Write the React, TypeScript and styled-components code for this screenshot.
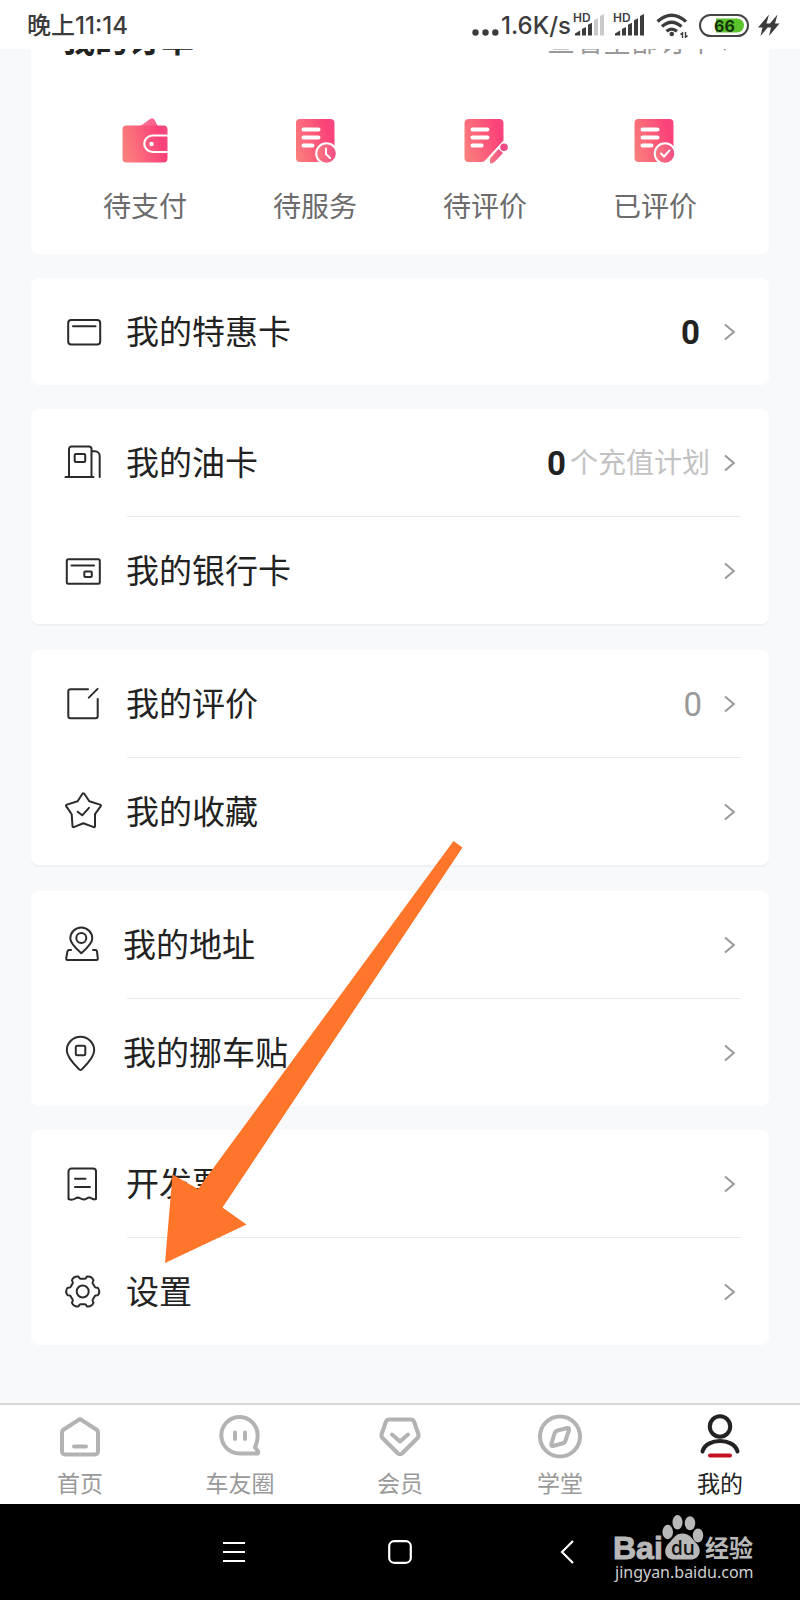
import React from "react";
import styled, { createGlobalStyle } from "styled-components";

const GlobalStyle = createGlobalStyle`
  *, *::before, *::after { box-sizing: border-box; }
  body {
    margin: 0;
    background: #f7f9fb;
    color: #222;
    font-family: Roboto, "Noto Sans CJK SC", sans-serif;
  }
  a { color: inherit; text-decoration: none; }
  button { font: inherit; color: inherit; border: 0; padding: 0; background: none; cursor: pointer; }
  ul { list-style: none; margin: 0; padding: 0; }
  svg { display: block; flex: none; overflow: visible; }
`;

const Page = styled.div`
  position: relative;
  display: flex;
  flex-direction: column;
  min-height: 100vh;
`;

/* ---------- status bar ---------- */

const StatusBar = styled.header`
  display: flex;
  align-items: center;
  justify-content: space-between;
  height: 49px;
  padding: 0 20px 0 27px;
  background: #fff;
  color: #3c3c3c;
  font: 500 24px/48px Inter, "Noto Sans CJK SC", sans-serif;
`;

const StatusText = styled.span`
  padding-top: 2px;
`;

const StatusGroup = styled.div`
  display: flex;
  align-items: center;
`;

const StatusIcon = styled.svg<{ $gap: number }>`
  margin-left: ${(p) => p.$gap}px;
`;

const Signal = ({ gap, bars }: { gap: number; bars: number }) => (
  <StatusIcon $gap={gap} width="32" height="48" viewBox="0 0 32 48" fill="#3c3c3c">
    <text x="-1" y="21" fontFamily="Inter, sans-serif" fontSize="12" fontWeight="600">HD</text>
    <path d="M1 34.600V32.500L6.200 29.500V34.600z" />
    {[1, 2, 3, 4].map((i) => {
      const top = 31 - i * 4.4;
      const left = 2 + i * 6;
      return <path key={i} d={`M${left} ${top + 1.5}l4-2V34.600h-4z`} opacity={i < bars ? 1 : 0.28} />;
    })}
  </StatusIcon>
);

/* ---------- cards ---------- */

const Main = styled.main`
  flex: 1;
  display: flex;
  flex-direction: column;
  gap: 24px;
  padding: 0 31px 58px;
  overflow: hidden;
`;

const Card = styled.section<{ $edge?: boolean; $scrolled?: boolean }>`
  background: #fff;
  border-radius: ${(p) => (p.$scrolled ? "0 0 8px 8px" : "8px")};
  ${(p) => p.$edge && "margin-bottom: 2px; box-shadow: 0 2px 0 #eff0f2;"}
`;

const OrdersHead = styled.div`
  display: flex;
  align-items: center;
  justify-content: space-between;
  height: 48px;
  margin-top: -32px;
  padding: 0 36px 0 31px;
`;

const OrdersTitle = styled.h2`
  margin: 0;
  font-size: 33px;
  line-height: 48px;
  font-weight: 700;
`;

const AllOrders = styled.a`
  display: flex;
  align-items: center;
  gap: 8px;
  padding-top: 4px;
  font-size: 28px;
  line-height: 40px;
  color: #999;
`;

const OrderGrid = styled.div`
  display: grid;
  grid-template-columns: repeat(4, 1fr);
  padding: 52px 29px 26px;
`;

const OrderLink = styled.a`
  display: flex;
  flex-direction: column;
  align-items: center;
  gap: 23px;
  font-size: 28px;
  line-height: 40px;
  color: #6c6c6c;
`;

const Row = styled.a<{ $gap: number }>`
  display: flex;
  align-items: center;
  gap: ${(p) => p.$gap}px;
  height: 107px;
  padding: 0 34px 0 35px;
  font-size: 33px;
  line-height: 40px;
`;

const Divider = styled.li`
  height: 1px;
  margin: 0 28px 0 96px;
  background: #e9e9eb;
`;

const RowLabel = styled.span`
  flex: 1;
  padding-top: 2px;
`;

const RowTail = styled.span`
  display: flex;
  align-items: center;
  gap: 4px;
`;

const Count = styled.span<{ $strong?: boolean; $pad?: boolean }>`
  padding-top: 2px;
  font-size: 33px;
  font-weight: ${(p) => (p.$strong ? 700 : 400)};
  color: ${(p) => (p.$strong ? "#222" : "#999")};
  margin-right: ${(p) => (p.$pad ? (p.$strong ? 10 : 8) : 0)}px;
`;

const Unit = styled.span`
  padding-top: 2px;
  font-size: 28px;
  color: #c2c2c2;
`;

const ChevronBox = styled.span`
  padding-left: 10px;
`;

const Chevron = () => (
  <ChevronBox>
    <svg width="11" height="18" viewBox="0 0 11 18" fill="none" stroke="#999" strokeWidth="2">
      <path d="M1 1.500 9.800 9 1 16.500" />
    </svg>
  </ChevronBox>
);

/* ---------- order icons ---------- */

const OrderIcon = ({ children }: { children: React.ReactNode }) => (
  <svg width="48" height="48" viewBox="0 0 48 48">
    <defs>
      <linearGradient id="coral" gradientUnits="userSpaceOnUse" x1="2" y1="30" x2="46" y2="18">
        <stop offset="0" stopColor="#fb7f7c" />
        <stop offset="0.85" stopColor="#fb4179" />
        <stop offset="1" stopColor="#f54a80" />
      </linearGradient>
      <linearGradient id="badge" x1="0" y1="0" x2="1" y2="0">
        <stop offset="0" stopColor="#fb7880" />
        <stop offset="1" stopColor="#f04c84" />
      </linearGradient>
    </defs>
    {children}
  </svg>
);

const DocLines = () => (
  <path d="M12.500 12.500h15M12.500 20.500h15M12.500 28.500h9" stroke="#fff" strokeWidth="4" strokeLinecap="round" fill="none" />
);

const docBody = "M9 2H39.500a4 4 0 0 1 4 4V41a4 4 0 0 1-4 4H9a4 4 0 0 1-4-4V6a4 4 0 0 1 4-4z";

const WalletIcon = () => (
  <OrderIcon>
    <path d="M18 10 29.500 1.800Q32 .2 33.400 2.800L37 9.500z" fill="url(#coral)" opacity="0.85" />
    <rect x="1.500" y="8.500" width="45" height="37" rx="4" fill="url(#coral)" />
    <path d="M47 18.500H31.500a8 8 0 0 0 0 16.500H47" fill="none" stroke="#fff" strokeWidth="2.200" />
    <circle cx="30.500" cy="27" r="2.200" fill="#fff" />
  </OrderIcon>
);

const DocClockIcon = () => (
  <OrderIcon>
    <path d={docBody} fill="url(#coral)" />
    <DocLines />
    <circle cx="35.500" cy="36.500" r="10.300" fill="url(#badge)" stroke="#fff" strokeWidth="2" />
    <path d="M35 31.500v5.500l4 4" fill="none" stroke="#fff" strokeWidth="2" strokeLinecap="round" />
  </OrderIcon>
);

const DocPenIcon = () => (
  <OrderIcon>
    <path d="M7 2H38.500a4 4 0 0 1 4 4V23.500L24 43.500Q22.500 45 20.500 45H7.500a4 4 0 0 1-4-4V6a4 4 0 0 1 4-4z" fill="url(#coral)" />
    <path d="M11.500 12.500h15M11.500 20.500h15M11.500 28.500h9" stroke="#fff" strokeWidth="4" strokeLinecap="round" />
    <path d="m31 44 12-13.500" stroke="#fff" strokeWidth="10" strokeLinecap="round" />
    <path d="M29 45.500V41.500L37.500 32 42 36 33.500 45 31 46.300Q29 46.800 29 45.500z" fill="url(#badge)" />
    <circle cx="43" cy="30.300" r="3.800" fill="#f04c84" />
  </OrderIcon>
);

const DocCheckIcon = () => (
  <OrderIcon>
    <path d="M7 2H38.500a4 4 0 0 1 4 4V41a4 4 0 0 1-4 4H7.500a4 4 0 0 1-4-4V6a4 4 0 0 1 4-4z" fill="url(#coral)" />
    <path d="M11.500 12.500h15M11.500 20.500h15M11.500 28.500h9" stroke="#fff" strokeWidth="4" strokeLinecap="round" />
    <circle cx="34" cy="36.500" r="10.300" fill="url(#badge)" stroke="#fff" strokeWidth="2" />
    <path d="m30 36.500 3 3 5.500-6" fill="none" stroke="#fff" strokeWidth="2" strokeLinecap="round" />
  </OrderIcon>
);

/* ---------- list icons ---------- */

const LineIcon = ({ children }: { children: React.ReactNode }) => (
  <svg width="36" height="36" viewBox="0 0 36 36" fill="none" stroke="#2b2b2b" strokeWidth="2" strokeLinecap="round" strokeLinejoin="round">
    {children}
  </svg>
);

const gearPath = (() => {
  const corner = (k: number, offset: number, radius: number) => {
    const angle = ((k * 60 + offset) * Math.PI) / 180;
    return `${(16.7 + radius * Math.cos(angle)).toFixed(2)} ${(17.5 + radius * Math.sin(angle)).toFixed(2)}`;
  };
  let d = "";
  for (let k = 0; k < 6; k++) {
    d += `${k ? "L" : "M"}${corner(k, -20, 13)}Q${corner(k, -16, 13.4)} ${corner(k, -14, 15.6)}`;
    d += `Q${corner(k, 0, 18)} ${corner(k, 14, 15.6)}Q${corner(k, 16, 13.4)} ${corner(k, 20, 13)}`;
  }
  return `${d}Z`;
})();

const icons = {
  card: <><rect x="2.200" y="6" width="32" height="24.500" rx="3" /><path d="M7 12.200h22.500" /></>,
  fuel: <><path d="M-.5 32H27.500M3 32V4a2.500 2.500 0 0 1 2.500-2.500H23A2.500 2.500 0 0 1 25.500 4v28M25.500 6.300H29a4.700 4.700 0 0 1 4.700 4.700v21" /><rect x="8.700" y="9" width="10.500" height="8" rx="1" /></>,
  bank: <><rect x=".8" y="6.300" width="33" height="24.500" rx="1.500" /><path d="M5.500 12.400h22.500" /><rect x="18.300" y="18.400" width="7.500" height="5.500" rx="1" /></>,
  review: <path d="M22 3.200H4.300a2 2 0 0 0-2 2v25a2 2 0 0 0 2 2H29.700a2 2 0 0 0 2-2V13M22.800 11.600 31.600 2.900" />,
  star: <><path d="M17.300-.5Q17.900-.8 18.500 0L23.300 7.200 34 10.600Q35.500 11.200 34.600 12.400L29 20.200V32Q29 33.500 27.800 33.100L17.300 29.300 7.800 33.100Q6.400 33.500 6.500 32L5.700 20.200.3 12.400Q-.6 11.200.9 10.600L11.600 7.200 16.300 0Q16.800-.8 17.300-.5z" /><path d="m11.600 17.700 4.600 3.600 6.800-7.500" /></>,
  address: <><path d="M15.300 26.300Q4.300 16.500 4.300 11.500a11 11 0 0 1 22 0Q26.300 16.500 15.300 26.300z" /><circle cx="15.300" cy="11" r="5" /><path d="M5 23H3.200Q1.700 23 1.400 24.500L.2 31.500Q0 33 1.500 33H30.500Q32 33 31.800 31.500L31 24.500Q30.800 23 29.300 23H27" /></>,
  sticker: <><path d="M14.500 35Q13.500 35 12.800 34 .8 22 .8 15.500a13.700 13.700 0 0 1 27.400 0Q28.200 22 16.200 34 15.500 35 14.500 35z" /><rect x="9.800" y="10.800" width="9.500" height="9.500" rx="1.500" /></>,
  invoice: <path d="M2.500 33V5.500a3 3 0 0 1 3-3H27a3 3 0 0 1 3 3V33Q27.500 34 25.500 32.300 23.300 30.800 21 32.300 18.500 34.300 16.200 33.200L14 32.200Q11.500 30.900 9.300 32.500 6 34.500 2.500 33zM9 12.800H19.500M9 21H24" />,
  gear: <><path d={gearPath} /><circle cx="16.700" cy="17.500" r="6" /></>,
};

interface Item {
  icon: keyof typeof icons;
  label: string;
  tail?: React.ReactNode;
}

const groups: { items: Item[]; edge?: boolean; gap: number }[] = [
  { gap: 24, items: [{ icon: "card", label: "我的特惠卡", tail: <Count $strong $pad>0</Count> }] },
  {
    gap: 24,
    edge: true,
    items: [
      { icon: "fuel", label: "我的油卡", tail: <><Count $strong>0</Count><Unit>个充值计划</Unit></> },
      { icon: "bank", label: "我的银行卡" },
    ],
  },
  {
    gap: 24,
    edge: true,
    items: [
      { icon: "review", label: "我的评价", tail: <Count $pad>0</Count> },
      { icon: "star", label: "我的收藏" },
    ],
  },
  { gap: 21, items: [{ icon: "address", label: "我的地址" }, { icon: "sticker", label: "我的挪车贴" }] },
  { gap: 24, items: [{ icon: "invoice", label: "开发票" }, { icon: "gear", label: "设置" }] },
];

/* ---------- tab bar ---------- */

const TabBar = styled.nav`
  display: grid;
  grid-template-columns: repeat(5, 1fr);
  height: 101px;
  border-top: 2px solid #d6d6d8;
  background: #fff;
`;

const Tab = styled.a<{ $active?: boolean }>`
  display: flex;
  flex-direction: column;
  align-items: center;
  gap: 9px;
  padding-top: 8px;
  font-size: 23px;
  line-height: 30px;
  color: ${(p) => (p.$active ? "#222" : "#999")};
`;

const TabIcon = ({ color = "#b3b3b3", children }: { color?: string; children: React.ReactNode }) => (
  <svg width="48" height="48" viewBox="0 0 48 48" fill="none" stroke={color} strokeWidth="4" strokeLinecap="round" strokeLinejoin="round">
    {children}
  </svg>
);

const tabs = [
  { label: "首页", icon: <TabIcon><path d="M24 6 41 17Q42 18 42 19.500V38.500a3 3 0 0 1-3 3H9a3 3 0 0 1-3-3V19.500Q6 18 7 17zM18 33.500H30" /></TabIcon> },
  { label: "车友圈", icon: <TabIcon><path d="M41.500 40.500H23.500A18.200 18.200 0 1 1 41.700 22.300Q41.700 29 39 34.500L41.500 37.500Q43 39.500 41.500 40.500zM19 19.500v6.500M29 19.500v6.500" /></TabIcon> },
  { label: "会员", icon: <TabIcon><path d="M13 6.500H35Q37 6.500 38 8.500L42.500 21.500Q43 23.500 41.500 25L26 40.500Q24 42 22 40.500L6.500 25Q5 23.500 5.500 21.500L10 8.500Q11 6.500 13 6.500zM16 21.500l8 7 8-7" /></TabIcon> },
  { label: "学堂", icon: <TabIcon><circle cx="24" cy="23.500" r="20" /><path d="M21.500 17.500 31.500 15Q33.500 14.800 33 17L29.500 27.500Q29 29.500 27 30.200L17 33Q14.800 33.300 15.300 31L18.500 20.500Q19.200 18.200 21.500 17.500z" /></TabIcon> },
  { label: "我的", active: true, icon: <TabIcon color="#222"><circle cx="24" cy="13.500" r="10.200" /><path d="M6.500 38.500C10 24.500 38 24.500 41.500 38.500" /><path d="M14 42.500H34" stroke="#c51220" /></TabIcon> },
];

/* ---------- system navigation ---------- */

const SystemNav = styled.footer`
  position: relative;
  display: flex;
  align-items: center;
  justify-content: center;
  gap: 118px;
  height: 96px;
  background: #000;
`;

const NavButton = styled.button`
  display: grid;
  place-items: center;
  width: 48px;
  height: 48px;
`;

const Watermark = styled.svg`
  position: absolute;
  right: 44px;
  top: 8px;
`;

const Pointer = styled.svg`
  position: absolute;
  left: 164px;
  top: 840px;
  pointer-events: none;
`;

export default function App() {
  return (
    <Page>
      <GlobalStyle />
      <StatusBar>
        <StatusText>晚上11:14</StatusText>
        <StatusGroup>
          <StatusIcon $gap={0} width="29" height="48" viewBox="0 0 29 48" fill="#3c3c3c">
            <circle cx="3.500" cy="31.500" r="3.200" /><circle cx="13.500" cy="31.500" r="3.200" /><circle cx="23.300" cy="31.500" r="3.200" />
          </StatusIcon>
          <StatusText>1.6K/s</StatusText>
          <Signal gap={3} bars={3} />
          <Signal gap={8} bars={5} />
          <StatusIcon $gap={10} width="32" height="48" viewBox="0 0 32 48" fill="none" stroke="#3c3c3c" strokeWidth="3.200">
            <path d="M1.500 20.500Q15.500 8 30 20.500M6 25.500Q15.500 17 25.500 25.500M10.500 30.300Q15.500 26 21 30.300" />
            <circle cx="15.800" cy="33" r="2.300" fill="#3c3c3c" stroke="none" />
            <path d="M26.500 31v6M24.500 33.500l2-2M29.500 31v6M29.500 36.500l2-2" strokeWidth="1.400" />
          </StatusIcon>
          <StatusIcon $gap={11} width="50" height="48" viewBox="0 0 50 48">
            <rect x="1" y="14" width="48" height="21" rx="10.500" fill="#fff" stroke="#444" strokeWidth="2" />
            <path d="M17 17.500H38a7 7 0 0 1 0 14H17z" fill="#5cc22e" />
            <text x="25.500" y="30.500" textAnchor="middle" fontFamily="Inter, sans-serif" fontSize="16" fontWeight="700" fill="#12320a">66</text>
          </StatusIcon>
          <StatusIcon $gap={9} width="22" height="48" viewBox="0 0 22 48" fill="#3c3c3c">
            <path d="M11 13.500 0 26.500H4.500L2.500 35 13 22.500H8.500zM19.500 13.500 8.500 26.500H13L11 35 21.500 22.500H17z" />
          </StatusIcon>
        </StatusGroup>
      </StatusBar>

      <Main>
        <Card $scrolled>
          <OrdersHead>
            <OrdersTitle>我的订单</OrdersTitle>
            <AllOrders href="#orders">
              查看全部订单
              <svg width="10" height="24" viewBox="0 0 10 24" fill="none" stroke="#999" strokeWidth="2"><path d="m1 3 7 8-7 8" /></svg>
            </AllOrders>
          </OrdersHead>
          <OrderGrid>
            <OrderLink href="#pay"><WalletIcon />待支付</OrderLink>
            <OrderLink href="#service"><DocClockIcon />待服务</OrderLink>
            <OrderLink href="#review"><DocPenIcon />待评价</OrderLink>
            <OrderLink href="#reviewed"><DocCheckIcon />已评价</OrderLink>
          </OrderGrid>
        </Card>

        {groups.map((group) => (
          <Card key={group.items[0].label} $edge={group.edge}>
            <ul>
              {group.items.map((item, i) => (
                <React.Fragment key={item.label}>
                  {i > 0 && <Divider role="separator" />}
                  <li>
                    <Row href={`#${item.icon}`} $gap={group.gap}>
                      <LineIcon>{icons[item.icon]}</LineIcon>
                      <RowLabel>{item.label}</RowLabel>
                      <RowTail>
                        {item.tail}
                        <Chevron />
                      </RowTail>
                    </Row>
                  </li>
                </React.Fragment>
              ))}
            </ul>
          </Card>
        ))}
      </Main>

      <TabBar>
        {tabs.map((tab) => (
          <Tab key={tab.label} href={`#${tab.label}`} $active={tab.active}>
            {tab.icon}
            {tab.label}
          </Tab>
        ))}
      </TabBar>

      <SystemNav>
        <NavButton aria-label="菜单">
          <svg width="22" height="24" viewBox="0 0 22 24" stroke="#fff" strokeWidth="2.200"><path d="M0 3h22M0 12h22M0 21h22" /></svg>
        </NavButton>
        <NavButton aria-label="主屏幕">
          <svg width="24" height="24" viewBox="0 0 24 24" fill="none" stroke="#fff" strokeWidth="2.200"><rect x="1.200" y="1.200" width="21.600" height="21.600" rx="5" /></svg>
        </NavButton>
        <NavButton aria-label="返回">
          <svg width="14" height="24" viewBox="0 0 14 24" fill="none" stroke="#fff" strokeWidth="2.200"><path d="M14 1 3 12l11 11" /></svg>
        </NavButton>
        <Watermark width="144" height="76" viewBox="0 0 144 76" fill="#b8b8b8">
          <text x="1" y="47" fontFamily="Liberation Sans, sans-serif" fontSize="32" fontWeight="700" stroke="#b8b8b8" strokeWidth="1">Bai</text>
          <ellipse cx="55.700" cy="20" rx="5.300" ry="7.200" />
          <ellipse cx="65.500" cy="10.300" rx="5" ry="7.200" />
          <ellipse cx="78" cy="11.300" rx="5.200" ry="7" />
          <ellipse cx="86" cy="23.500" rx="5.200" ry="7" />
          <path d="M70.500 21.500C78 21.500 80 27 84.500 31.500 91 38 87 47.500 79 47.500 75 47.500 66 47.500 62 47.500 53 47.500 50.500 38 56.500 31.500 61.500 26.500 63.500 21.500 70.500 21.500z" />
          <text x="59" y="43" fontFamily="Open Sans, sans-serif" fontSize="19" fontWeight="600" fill="#111">du</text>
          <text x="93" y="45" fontFamily="Noto Sans CJK SC, sans-serif" fontSize="24" fontWeight="700">经验</text>
          <text x="3" y="66" fontFamily="Noto Sans, sans-serif" fontSize="16" fontWeight="400" fill="#d0d0d0">jingyan.baidu.com</text>
        </Watermark>
      </SystemNav>

      <Pointer width="300" height="424" viewBox="0 0 300 424" fill="#ff7529" aria-hidden="true">
        <path d="M289.500 1 298.500 7.500 58.500 367.500 82.500 384.500 1 423 8.500 334.500 34 349z" />
      </Pointer>
    </Page>
  );
}
